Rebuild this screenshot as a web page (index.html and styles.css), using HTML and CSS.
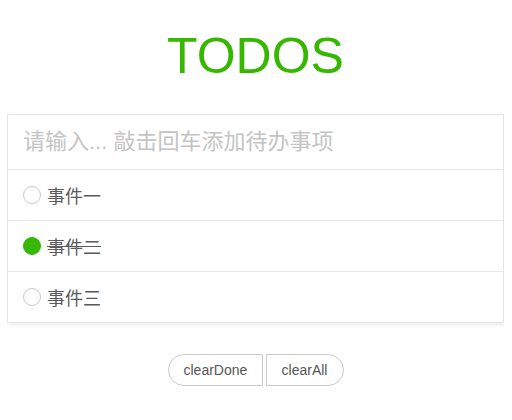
FILE: index.html
```html
<!DOCTYPE html>
<html lang="zh">
<head>
<meta charset="utf-8">
<title>TODOS</title>
<link rel="stylesheet" href="styles.css">
</head>
<body>
  <h1 class="title">TODOS</h1>
  <div class="card">
    <div class="input-row">
      <input class="new-todo" type="text" placeholder="请输入... 敲击回车添加待办事项">
    </div>
    <ul class="list">
      <li class="item">
        <span class="check"></span>
        <span class="label">事件一</span>
      </li>
      <li class="item done">
        <span class="check"></span>
        <span class="label">事件二</span>
      </li>
      <li class="item">
        <span class="check"></span>
        <span class="label">事件三</span>
      </li>
    </ul>
  </div>
  <div class="actions">
    <button class="btn btn-left">clearDone</button><button class="btn btn-right">clearAll</button>
  </div>
</body>
</html>
```
FILE: styles.css
```css
html, body {
  background: #fff;
}
body {
  margin: 8px 8px 8px 7px;
  font-family: "Liberation Sans", "Noto Sans CJK SC", sans-serif;
  color: #555;
}
.title {
  margin: 20px 0 30px;
  text-align: center;
  font-family: "Liberation Sans", Arial, sans-serif;
  font-weight: normal;
  font-size: 50px;
  line-height: 56px;
  color: #36b800;
}
.card {
  width: 497px;
  box-sizing: border-box;
  border: 1px solid #e4e4e4;
  box-shadow: 1px 2px 4px rgba(0, 0, 0, 0.08);
  background: #fff;
}
.input-row {
  height: 54px;
  border-bottom: 1px solid #e8e8e8;
  display: flex;
  align-items: center;
  padding: 0 15px;
}
.new-todo {
  flex: 1;
  border: none;
  outline: none;
  padding: 0;
  font-family: "Liberation Sans", "Noto Sans CJK SC", sans-serif;
  font-size: 22px;
  color: #555;
  background: transparent;
}
.new-todo::placeholder {
  color: #c4c4c4;
}
.list {
  list-style: none;
  margin: 0;
  padding: 0;
}
.item {
  height: 50px;
  display: flex;
  align-items: center;
  gap: 6px;
  padding: 0 15px;
  border-bottom: 1px solid #e8e8e8;
  font-family: "Noto Sans CJK SC", sans-serif;
  font-size: 18px;
  color: #5a5a5a;
}
.item:last-child {
  border-bottom: none;
}
.check {
  width: 16px;
  height: 16px;
  border: 1px solid #c8c8c8;
  border-radius: 50%;
  box-sizing: content-box;
  flex: none;
}
.done .check {
  background: #36b800;
  border-color: #36b800;
}
.done .label {
  text-decoration: line-through;
}
.actions {
  margin-top: 31px;
  display: flex;
  justify-content: center;
  gap: 3px;
}
.btn {
  height: 32px;
  border: 1px solid #c8c8c8;
  background: #fff;
  font-family: "Liberation Sans", Arial, sans-serif;
  font-size: 14px;
  color: #555;
  padding: 0 15px;
  cursor: pointer;
}
.btn-left {
  border-radius: 16px 0 0 16px;
  width: 95px;
}
.btn-right {
  border-radius: 0 16px 16px 0;
  width: 78px;
}
```
